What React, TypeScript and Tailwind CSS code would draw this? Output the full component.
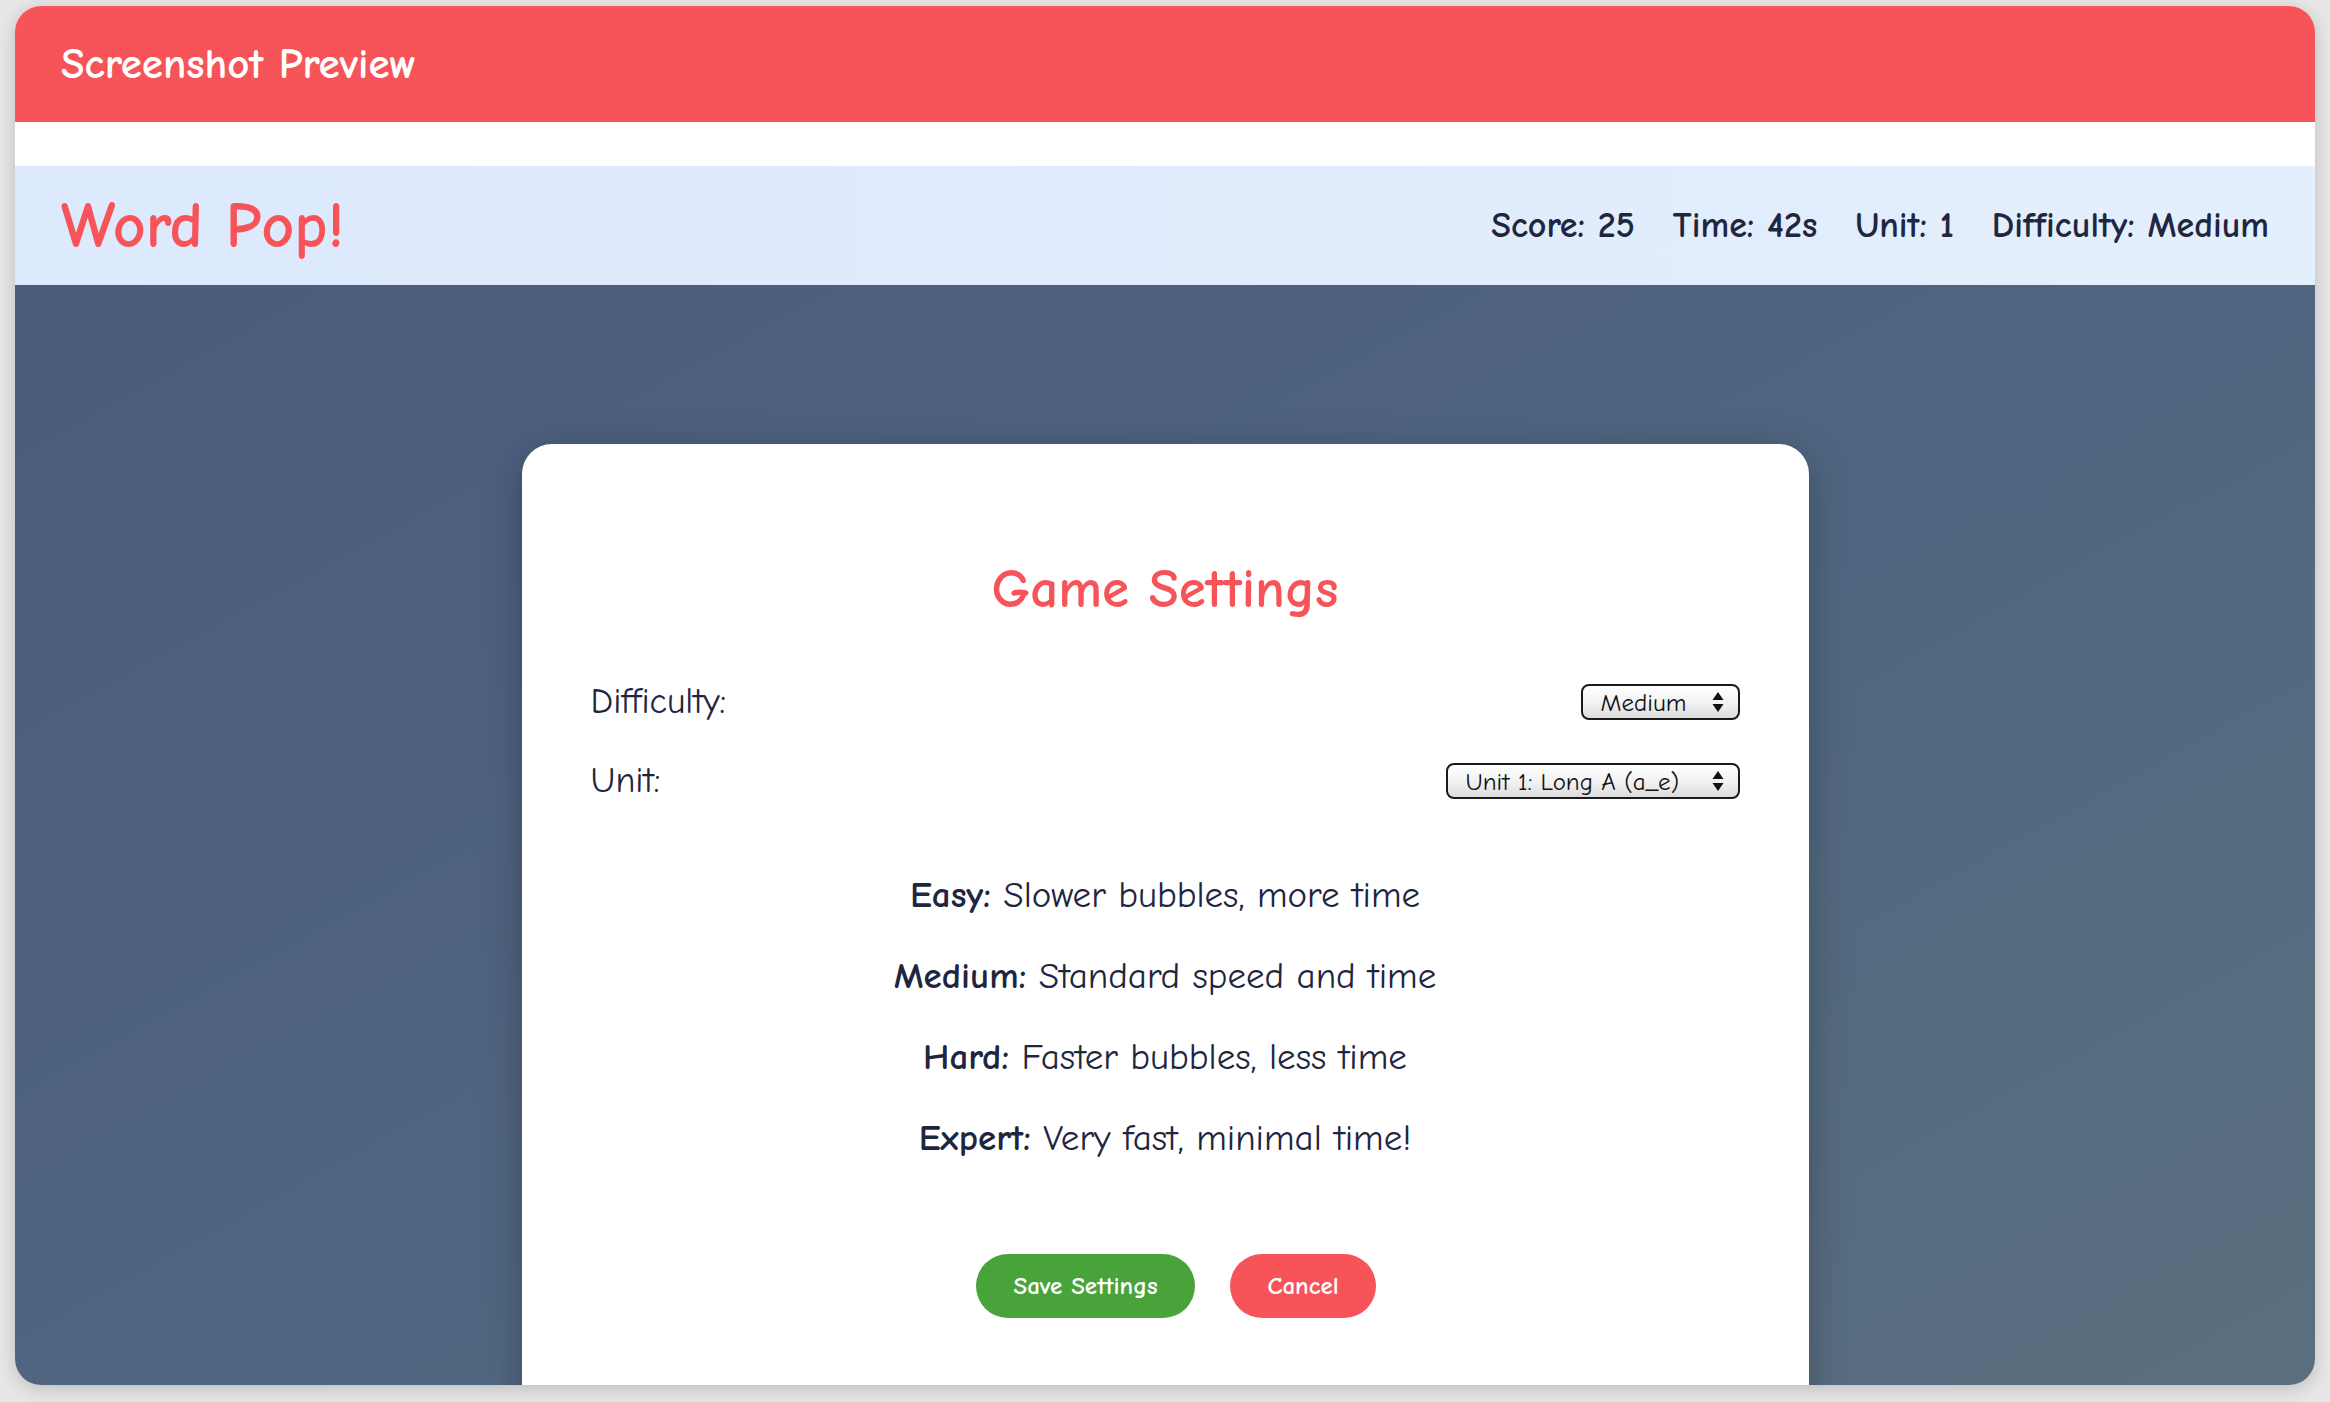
import React from "react";

const font = { fontFamily: '"Comic Sans MS", "Comic Neue", "Noto Sans", sans-serif' };

function FakeSelect({ label, width }: { label: string; width: string }) {
  return (
    <div
      className={`${width} h-[36px] flex items-center justify-between rounded-[8px] border-2 border-[#1a1a1a] bg-gradient-to-b from-[#ffffff] via-[#f3f3f3] to-[#dcdcdc] pl-[18px] pr-[14px] text-[25px] text-[#111]`}
    >
      <span className="leading-none">{label}</span>
      <svg width="12" height="22" viewBox="0 0 12 22" className="shrink-0">
        <path d="M6 1 L11.5 9 L0.5 9 Z" fill="#111" />
        <path d="M6 21 L11.5 13 L0.5 13 Z" fill="#111" />
      </svg>
    </div>
  );
}

export default function App() {
  return (
    <div className="w-[2330px] h-[1402px] bg-[#e7e7e7] pt-[6px] overflow-hidden" style={font}>
      <div className="mx-[15px] h-[1379px] rounded-[26px] overflow-hidden shadow-[0_4px_18px_rgba(0,0,0,0.18)] flex flex-col bg-white">
        <div className="h-[116px] bg-[#f7545a] flex items-center px-[46px] shrink-0">
          <span className="text-white font-bold text-[43px] leading-none">Screenshot Preview</span>
        </div>
        <div className="h-[44px] bg-white shrink-0" />
        <div className="h-[119px] bg-gradient-to-r from-[#dde9fc] to-[#e3effc] flex items-center justify-between px-[46px] shrink-0">
          <span className="text-[#f7545a] text-[64px] leading-none font-semibold">Word Pop!</span>
          <div className="flex items-center gap-[38px] text-[36px] font-bold text-[#1e2640]">
            <span>Score: 25</span>
            <span>Time: 42s</span>
            <span>Unit: 1</span>
            <span>Difficulty: Medium</span>
          </div>
        </div>
        <div className="flex-1 bg-gradient-to-br from-[#4a5b7c] via-[#506680] to-[#5b717f] flex justify-center pt-[159px]">
          <div className="w-[1287px] h-[1100px] bg-white rounded-[30px] px-[69px] pt-[115px] shadow-[0_10px_40px_rgba(0,0,0,0.25)] flex flex-col">
            <h1 className="text-center text-[#f7545a] font-bold text-[55px] leading-[60px]">Game Settings</h1>
            <div className="mt-[65px] flex items-center justify-between h-[36px]">
              <span className="text-[36px] text-[#1e2640]">Difficulty:</span>
              <FakeSelect label="Medium" width="w-[159px]" />
            </div>
            <div className="mt-[43px] flex items-center justify-between h-[36px]">
              <span className="text-[36px] text-[#1e2640]">Unit:</span>
              <FakeSelect label="Unit 1: Long A (a_e)" width="w-[294px]" />
            </div>
            <div className="mt-[56px] flex flex-col items-center text-[37px] text-[#1e2640]">
              <p className="h-[81px] leading-[81px]"><b>Easy:</b> Slower bubbles, more time</p>
              <p className="h-[81px] leading-[81px]"><b>Medium:</b> Standard speed and time</p>
              <p className="h-[81px] leading-[81px]"><b>Hard:</b> Faster bubbles, less time</p>
              <p className="h-[81px] leading-[81px]"><b>Expert:</b> Very fast, minimal time!</p>
            </div>
            <div className="mt-[75px] ml-[22px] flex justify-center gap-[35px]">
              <button className="w-[219px] h-[64px] rounded-full bg-[#49a33b] text-white font-bold text-[25px]">Save Settings</button>
              <button className="w-[146px] h-[64px] rounded-full bg-[#f7545a] text-white font-bold text-[25px]">Cancel</button>
            </div>
          </div>
        </div>
      </div>
    </div>
  );
}
